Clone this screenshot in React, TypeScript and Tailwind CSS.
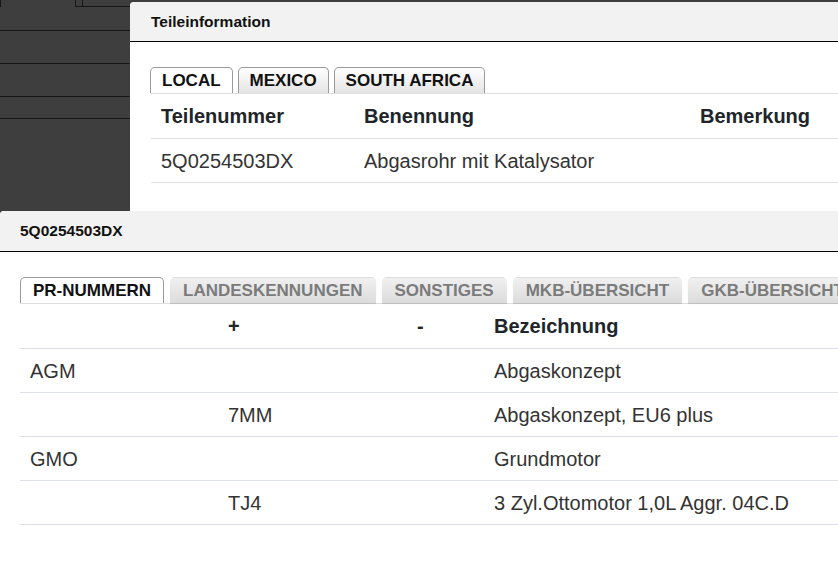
import React from "react";

const tabBase =
  "h-[26px] border border-b-0 rounded-t-[5px] font-bold text-[17px] leading-none flex items-center whitespace-nowrap";

function Tab1({ label, active }: { label: string; active?: boolean }) {
  return (
    <div
      className={
        tabBase +
        " px-[11px] border-[#9a9a9a] text-[#111] " +
        (active ? "bg-white" : "bg-gradient-to-b from-[#ffffff] to-[#e4e4e4]")
      }
    >
      {label}
    </div>
  );
}

function Tab2({ label, active }: { label: string; active?: boolean }) {
  return (
    <div
      className={
        tabBase +
        " px-[12px] " +
        (active
          ? "bg-white border-[#9a9a9a] text-[#111]"
          : "bg-gradient-to-b from-[#f0f0f0] to-[#dcdcdc] border-transparent text-[#7b7b7b] shadow-[0_1px_1px_rgba(0,0,0,0.15)]")
      }
    >
      {label}
    </div>
  );
}

export default function App() {
  const rows = [
    ["AGM", "", "", "Abgaskonzept"],
    ["", "7MM", "", "Abgaskonzept, EU6 plus"],
    ["GMO", "", "", "Grundmotor"],
    ["", "TJ4", "", "3 Zyl.Ottomotor 1,0L Aggr. 04C.D"],
  ];
  return (
    <div className="relative w-[838px] h-[567px] overflow-hidden bg-[#3e3e3e] font-['Liberation_Sans',Arial,sans-serif]">
      {/* background desktop */}
      <div className="flex flex-col w-[130px]">
        <div className="h-[31px] border-b border-[#161616] flex">
          <div className="w-[1px] h-[7px] bg-[#161616]" />
          <div className="ml-[74px] w-[8px] h-[7px] border-x border-b border-[#161616]" />
          <div className="flex-1 h-[7px] border-b border-[#161616]" />
        </div>
        <div className="h-[33px] border-b border-[#161616]" />
        <div className="h-[33px] border-b border-[#161616]" />
        <div className="h-[22px] border-b border-[#161616]" />
      </div>

      {/* Dialog 1 */}
      <div className="absolute left-[130px] top-[2px] w-[760px] h-[209px] bg-white rounded-tl-[4px] overflow-hidden">
        <div className="h-[40px] bg-[#f2f2f2] border-b border-black flex items-center pl-[21px] font-bold text-[15.5px] text-[#111]">
          Teileinformation
        </div>
        <div className="pl-[21px] pt-[25px]">
          <div className="flex items-end gap-[5px] border-b border-[#dddddd]">
            <div className="flex items-end gap-[5px] -ml-[1px]">
              <Tab1 label="LOCAL" active />
              <Tab1 label="MEXICO" />
              <Tab1 label="SOUTH AFRICA" />
            </div>
          </div>
          <div className="grid grid-cols-[203px_336px_1fr] text-[20px]">
            <div className="h-[45px] flex items-center pl-[10px] font-bold text-[#212529] border-b border-[#dee2e6]">Teilenummer</div>
            <div className="h-[45px] flex items-center pl-[10px] font-bold text-[#212529] border-b border-[#dee2e6]">Benennung</div>
            <div className="h-[45px] flex items-center pl-[10px] font-bold text-[#212529] border-b border-[#dee2e6]">Bemerkung</div>
            <div className="h-[44px] flex items-center pl-[10px] text-[#333] border-b border-[#dee2e6]">5Q0254503DX</div>
            <div className="h-[44px] flex items-center pl-[10px] text-[#333] border-b border-[#dee2e6]">Abgasrohr mit Katalysator</div>
            <div className="h-[44px] flex items-center pl-[10px] text-[#333] border-b border-[#dee2e6]"></div>
          </div>
        </div>
      </div>

      {/* Dialog 2 */}
      <div className="absolute left-0 top-[211px] w-[900px] h-[360px] bg-white rounded-tl-[4px] overflow-hidden">
        <div className="h-[41px] bg-[#f2f2f2] border-b border-black flex items-center pl-[20px] font-bold text-[15.5px] text-[#111]">
          5Q0254503DX
        </div>
        <div className="pl-[20px] pt-[25px]">
          <div className="flex items-end gap-[6px] border-b border-[#dddddd]">
            <Tab2 label="PR-NUMMERN" active />
            <Tab2 label="LANDESKENNUNGEN" />
            <Tab2 label="SONSTIGES" />
            <Tab2 label="MKB-ÜBERSICHT" />
            <Tab2 label="GKB-ÜBERSICHT" />
          </div>
          <div className="grid grid-cols-[198px_189px_77px_1fr] text-[20px]">
            <div className="h-[45px] flex items-center pl-[10px] font-bold text-[#212529] border-b border-[#dee2e6]"></div>
            <div className="h-[45px] flex items-center pl-[10px] font-bold text-[#212529] border-b border-[#dee2e6]">+</div>
            <div className="h-[45px] flex items-center pl-[10px] font-bold text-[#212529] border-b border-[#dee2e6]">-</div>
            <div className="h-[45px] flex items-center pl-[10px] font-bold text-[#212529] border-b border-[#dee2e6]">Bezeichnung</div>
            {rows.map((r, i) =>
              r.map((c, j) => (
                <div
                  key={i + "-" + j}
                  className="h-[44px] flex items-center pl-[10px] text-[#333] border-b border-[#dee2e6]"
                >
                  {c}
                </div>
              ))
            )}
          </div>
        </div>
      </div>
    </div>
  );
}
